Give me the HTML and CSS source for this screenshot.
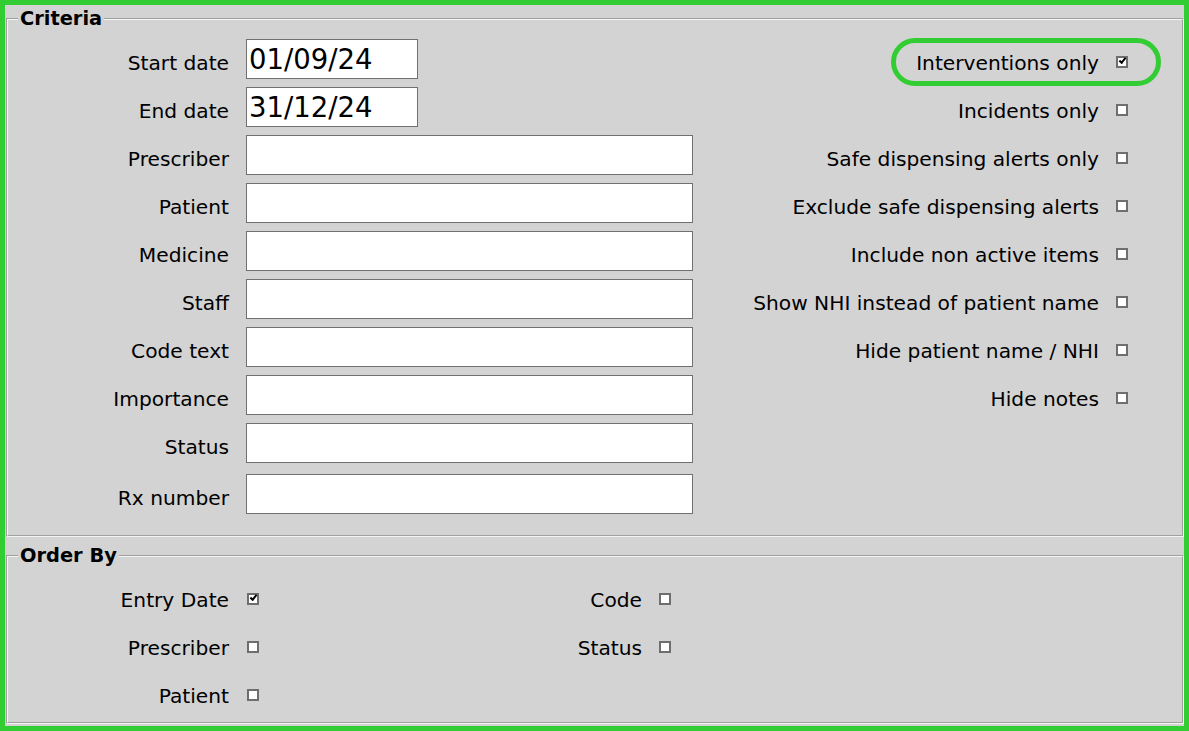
FILE: index.html
```html
<!DOCTYPE html>
<html lang="en">
<head>
    <meta charset="UTF-8">
    <title>Intervention Report</title>
    <link rel="stylesheet" href="styles.css">
</head>
<body>
    <div class="frame">
        <fieldset class="group criteria">
            <legend>Criteria</legend>
            <div class="criteria-body">
                <div class="fields">
                    <label>Start date</label><input type="text" class="date" value="01/09/24">
                    <label>End date</label><input type="text" class="date" value="31/12/24">
                    <label>Prescriber</label><input type="text">
                    <label>Patient</label><input type="text">
                    <label>Medicine</label><input type="text">
                    <label>Staff</label><input type="text">
                    <label>Code text</label><input type="text">
                    <label>Importance</label><input type="text">
                    <label>Status</label><input type="text">
                    <label class="last">Rx number</label><input type="text" class="last">
                </div>
                <div class="flags">
                    <label class="flag marked">Interventions only <input type="checkbox" checked></label>
                    <label class="flag">Incidents only <input type="checkbox"></label>
                    <label class="flag">Safe dispensing alerts only <input type="checkbox"></label>
                    <label class="flag">Exclude safe dispensing alerts <input type="checkbox"></label>
                    <label class="flag">Include non active items <input type="checkbox"></label>
                    <label class="flag">Show NHI instead of patient name <input type="checkbox"></label>
                    <label class="flag">Hide patient name / NHI <input type="checkbox"></label>
                    <label class="flag">Hide notes <input type="checkbox"></label>
                </div>
            </div>
        </fieldset>
        <fieldset class="group order">
            <legend>Order By</legend>
            <div class="order-grid">
                <label class="col-a">Entry Date</label><input type="checkbox" checked>
                <label class="col-b">Code</label><input type="checkbox">
                <label class="col-a">Prescriber</label><input type="checkbox">
                <label class="col-b">Status</label><input type="checkbox">
                <label class="col-a">Patient</label><input type="checkbox">
            </div>
        </fieldset>
    </div>
</body>
</html>
```

FILE: styles.css
```css
body {
    margin: 0;
    font-family: "DejaVu Sans", Verdana, sans-serif;
    font-size: 20.2px;
    color: #000;
}
.frame {
    box-sizing: border-box;
    width: 1189px;
    height: 731px;
    border: 5px solid #32cd32;
    background-color: #d3d3d3;
    overflow: hidden;
}
.group {
    margin: 3px 0 0 1px;
    padding: 0;
    border: 2px groove #f4f4f4;
    min-width: 0;
}
.group legend {
    margin-left: 10px;
    padding: 0 2px;
    font-size: 19.4px;
    font-weight: bold;
    line-height: 22px;
}
.criteria-body {
    display: flex;
    padding: 9px 0 21px;
}
.fields {
    display: grid;
    grid-template-columns: 221px auto;
    column-gap: 17px;
    row-gap: 8px;
    align-items: baseline;
    justify-items: start;
}
.fields label {
    justify-self: end;
    position: relative;
    top: 1px;
}
.fields .last {
    margin-top: 3px;
}
.fields input {
    box-sizing: border-box;
    width: 447px;
    height: 40px;
    margin: 0;
    padding: 0 2px;
    border: 1px solid #707070;
    background: #fff;
    font-family: "DejaVu Sans", Verdana, sans-serif;
    font-size: 27.5px;
    color: #000;
}
.fields input.date {
    width: 172px;
}
.flags {
    flex: 1;
    display: flex;
    flex-direction: column;
    align-items: flex-end;
    gap: 8px;
    padding: 4px 54px 0 0;
}
.flag {
    position: relative;
    display: flex;
    align-items: center;
    gap: 17px;
    height: 40px;
}
.flag input {
    position: relative;
    top: -1px;
}
/* green ring drawn round the highlighted option */
.flag.marked::before {
    content: "";
    position: absolute;
    top: -5px;
    bottom: -3px;
    left: -25px;
    right: -33px;
    border: 5px solid #32cd32;
    border-radius: 24px;
}
input[type="checkbox"] {
    appearance: none;
    position: relative;
    box-sizing: border-box;
    width: 12px;
    height: 12px;
    margin: 0;
    border: 2px solid #6e6e6e;
    background: #fff;
}
input[type="checkbox"]:checked::after {
    content: "";
    position: absolute;
    left: 1px;
    top: 0;
    width: 5px;
    height: 2px;
    border-left: 2px solid #000;
    border-bottom: 2px solid #000;
    transform: rotate(-50deg);
}
.order {
    margin-top: 8px;
}
.order-grid {
    display: grid;
    grid-template-columns: 221px 12px 364px 12px;
    grid-auto-rows: 40px;
    column-gap: 18px;
    row-gap: 8px;
    align-items: center;
    padding: 12px 0 7px;
}
.order-grid label {
    justify-self: end;
    position: relative;
    top: 1px;
}
.order-grid .col-b {
    margin-right: -1px;
}
```
